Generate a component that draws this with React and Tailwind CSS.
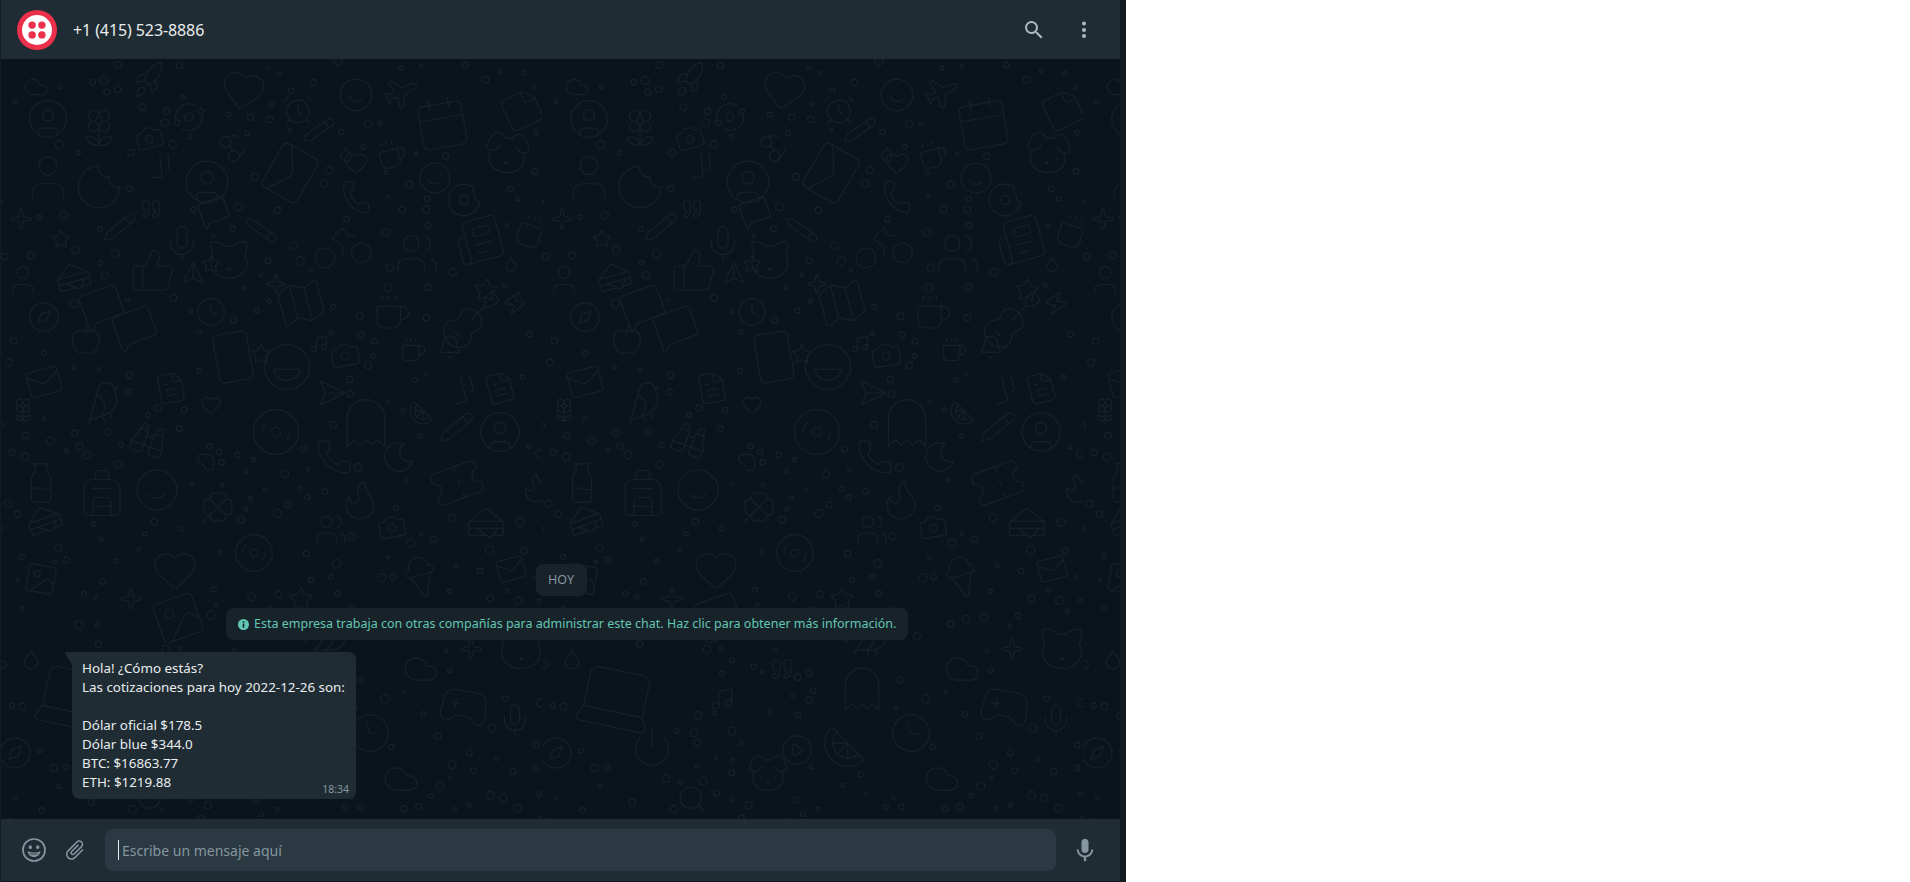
import {
    AlarmClock, Apple, Backpack, Bell, Bike, Binoculars, Bird, Calendar, Camera, Cat, CheckCheck, CircleUser, Citrus, Clock,
    Cloud, Clover, Coffee, Compass, Cookie, Disc3, Dog, Donut, FileText, Flame, Flower2, Gamepad2, Ghost, Glasses, Guitar,
    Heart, IceCreamCone, Image, Laptop, Mail, Map, MessageSquare, Mic, Milk, Moon, Music, Newspaper, Orbit, PawPrint,
    Pencil, Phone, CirclePlay, Plane, Power, Quote, Rocket, Sandwich, Send, Smartphone, Smile, Sparkle, Star, StickyNote,
    Ticket, ThumbsUp, User, Users, Zap, Droplet, Laugh, Search,
} from "lucide-react";

const TILE_W = 541;
const TILE_H = 985;
const LINE = "#172029";

// [icon, x, y, size, rotation] - tile coordinates read off the reference wallpaper
const DOODLES = [
    [Rocket, 148, 21, 36, -10], [Heart, 242, 31, 48, 10], [Smile, 355, 36, 38, 15], [Plane, 398, 34, 36, 20],
    [Calendar, 441, 64, 58, -10], [StickyNote, 521, 51, 44, -25], [Flower2, 98, 69, 42, 0], [Camera, 148, 79, 30, -15],
    [Orbit, 188, 58, 32, 20], [AlarmClock, 297, 51, 34, 0], [Glasses, 232, 88, 32, 60], [Pencil, 318, 71, 32, 10],
    [Coffee, 391, 96, 32, -15], [CircleUser, 47, 60, 44, 0], [User, 47, 118, 54, 0], [Dog, 506, 94, 52, 5],
    [Cookie, 98, 128, 50, 0], [CircleUser, 206, 123, 50, 0], [Mail, 289, 114, 60, -60], [CheckCheck, 160, 108, 34, -50],
    [Smile, 434, 119, 36, 15], [Heart, 355, 104, 26, 0], [Donut, 463, 141, 38, 20], [Phone, 355, 138, 34, 10],
    [Pencil, 119, 168, 34, 5], [MessageSquare, 213, 153, 32, -20], [Pencil, 260, 171, 32, 80], [Mic, 181, 184, 40, 0],
    [Bike, 340, 181, 68, -8], [Users, 416, 194, 46, 0], [Newspaper, 478, 181, 50, -15], [Coffee, 532, 174, 38, 20],
    [Cat, 228, 201, 48, 0], [ThumbsUp, 152, 211, 48, 0], [Send, 192, 218, 24, -45], [Sandwich, 72, 218, 38, -15],
    [User, 22, 221, 36, 0], [Map, 300, 244, 54, -15], [Guitar, 470, 261, 66, 0], [Star, 485, 231, 26, 5],
    [Zap, 514, 244, 26, 10], [Coffee, 391, 254, 40, 0], [Compass, 43, 258, 34, 0], [MessageSquare, 101, 248, 46, -20],
    [MessageSquare, 134, 269, 46, -20], [Clock, 210, 253, 32, 0], [Apple, 85, 281, 32, 0], [Smartphone, 232, 298, 58, -10],
    [Laugh, 286, 308, 54, 0], [Camera, 344, 296, 32, -10], [Coffee, 412, 291, 28, 0], [Bell, 449, 288, 26, 0],
    [Mail, 43, 323, 38, -15], [Bird, 101, 344, 48, -20], [FileText, 170, 329, 34, -10], [Heart, 210, 346, 22, 0],
    [Send, 326, 334, 30, 45], [CheckCheck, 463, 331, 38, -60], [FileText, 499, 329, 34, -15], [Disc3, 275, 373, 54, 0],
    [Ghost, 365, 364, 56, 0], [Citrus, 420, 354, 26, 0], [Pencil, 456, 368, 36, 5], [CircleUser, 499, 373, 46, 0],
    [Flower2, 22, 351, 26, 0], [Binoculars, 148, 381, 38, 20], [PawPrint, 210, 398, 32, 0], [Phone, 333, 398, 38, 0],
    [Moon, 398, 398, 38, 20], [Flame, 360, 440, 48, 10], [Milk, 40, 424, 46, 0], [Backpack, 101, 434, 54, 0],
    [Smile, 156, 431, 48, 0], [Clover, 217, 448, 38, 0], [Ticket, 456, 424, 56, -20], [Flame, 535, 428, 36, 0],
    [Sandwich, 43, 461, 38, -20], [Sandwich, 485, 464, 42, 0], [Camera, 391, 468, 30, -10], [Users, 330, 470, 34, 0],
    [Disc3, 253, 494, 44, 0], [Heart, 174, 511, 48, 0], [IceCreamCone, 420, 518, 48, -15], [Image, 177, 559, 54, -20],
    [Laptop, 74, 638, 90, 12], [Gamepad2, 463, 648, 54, 10], [Mic, 514, 661, 36, 0], [Clock, 369, 674, 44, -20],
    [Citrus, 302, 688, 46, 0], [Compass, 14, 694, 36, 0], [CirclePlay, 255, 691, 34, 0], [Power, 110, 688, 44, 0],
    [Dog, 226, 714, 46, 0], [Image, 40, 520, 36, 10], [Cat, 520, 590, 52, 0], [Star, 300, 540, 26, 0], [Mail, 510, 510, 32, -15],
    [Bird, 330, 580, 44, 0], [Cloud, 420, 610, 38, 0], [Ghost, 320, 630, 50, 0], [Music, 180, 640, 26, 0], [Droplet, 30, 600, 24, 0],
    [Quote, 240, 610, 24, 0], [Sparkle, 130, 540, 24, 0], [Sparkle, 470, 590, 24, 0], [Cloud, 400, 720, 38, 0], [Search, 150, 740, 32, 0],
    [Sparkle, 275, 225, 22, 0], [Sparkle, 20, 160, 24, 0], [Quote, 150, 150, 22, 0], [Cloud, 35, 28, 26, 0], [Star, 210, 205, 20, 0],
    [Star, 260, 295, 22, 0], [Music, 318, 285, 20, 0], [Droplet, 510, 205, 18, 0], [Droplet, 345, 95, 18, 0], [Star, 60, 180, 20, 0],
];

// seeded scatter of the little rings between the doodles
function scatterRings() {
    let seed = 73;
    const rand = () => {
        seed = (seed * 16807) % 2147483647;
        return seed / 2147483647;
    };
    const rings = [];
    for (let i = 0; i < 2400 && rings.length < 320; i++) {
        const x = rand() * TILE_W;
        const y = rand() * 780;
        const r = 1.6 + rand() * 2.6;
        const clear =
            DOODLES.every(([, dx, dy, size]) => Math.hypot(dx - x, dy - y) > size * 0.52 + r) &&
            rings.every((o) => Math.hypot(o.x - x, o.y - y) > 10);
        if (clear) rings.push({ x, y, r });
    }
    return rings;
}

const RINGS = scatterRings();

function Wallpaper() {
    return (
        <svg className="absolute inset-0 w-full h-full" aria-hidden="true">
            <defs>
                <pattern id="doodles" x="0" y="0" width={TILE_W} height={TILE_H} patternUnits="userSpaceOnUse">
                    {DOODLES.map(([Icon, x, y, size, rot], i) => (
                        <g key={i} transform={`translate(${x} ${y}) rotate(${rot})`}>
                            <Icon x={-size / 2} y={-size / 2} size={size} color={LINE} strokeWidth={1.1} absoluteStrokeWidth />
                        </g>
                    ))}
                    {RINGS.map((o, i) => (
                        <circle key={i} cx={o.x} cy={o.y} r={o.r} fill="none" stroke={LINE} strokeWidth="1.1" />
                    ))}
                </pattern>
            </defs>
            <rect width="100%" height="100%" fill="url(#doodles)" />
        </svg>
    );
}

function TwilioLogo() {
    return (
        <svg viewBox="0 0 40 40" className="w-10 h-10 shrink-0">
            <circle cx="20" cy="20" r="20" fill="#ea304a" />
            <circle cx="20" cy="20" r="15" fill="#ffffff" />
            <circle cx="15.1" cy="15.1" r="3.7" fill="#ea304a" />
            <circle cx="24.9" cy="15.1" r="3.7" fill="#ea304a" />
            <circle cx="15.1" cy="24.9" r="3.7" fill="#ea304a" />
            <circle cx="24.9" cy="24.9" r="3.7" fill="#ea304a" />
        </svg>
    );
}

function SearchIcon() {
    return (
        <svg viewBox="0 0 24 24" className="w-6 h-6 fill-[#aebac1]">
            <path d="M15.5 14h-.79l-.28-.27A6.47 6.47 0 0 0 16 9.5 6.5 6.5 0 1 0 9.5 16c1.61 0 3.09-.59 4.23-1.57l.27.28v.79l5 4.99L20.49 19l-4.99-5zm-6 0C7.01 14 5 11.99 5 9.5S7.01 5 9.5 5 14 7.01 14 9.5 11.99 14 9.5 14z" />
        </svg>
    );
}

function MenuIcon() {
    return (
        <svg viewBox="0 0 24 24" className="w-6 h-6 fill-[#aebac1]">
            <circle cx="12" cy="5.6" r="2" />
            <circle cx="12" cy="12" r="2" />
            <circle cx="12" cy="18" r="2" />
        </svg>
    );
}

function EmojiIcon() {
    return (
        <svg viewBox="0 0 24 24" className="w-6 h-6">
            <circle cx="12" cy="12" r="11" fill="none" stroke="#8696a0" strokeWidth="1.7" />
            <ellipse cx="8.3" cy="9.2" rx="1.6" ry="1.9" fill="#8696a0" />
            <ellipse cx="15.7" cy="9.2" rx="1.6" ry="1.9" fill="#8696a0" />
            <path d="M5.6 13.2c2 .9 4.1 1.3 6.4 1.3s4.4-.4 6.4-1.3c-.3 3.4-3 5.8-6.4 5.8s-6.1-2.4-6.4-5.8z" fill="#8696a0" />
            <path d="M7.6 15.2c1.4.4 2.9.6 4.4.6s3-.2 4.4-.6c-.2.4-.5.8-.8 1.1-1.1.2-2.3.3-3.6.3s-2.5-.1-3.6-.3c-.3-.3-.6-.7-.8-1.1z" fill="#202c33" />
        </svg>
    );
}

function AttachIcon() {
    return (
        <svg viewBox="0 0 24 24" className="w-6 h-6 fill-[#8696a0] rotate-45">
            <path d="M16.5 6v11.5c0 2.21-1.79 4-4 4s-4-1.79-4-4V5c0-1.38 1.12-2.5 2.5-2.5s2.5 1.12 2.5 2.5v10.5c0 .55-.45 1-1 1s-1-.45-1-1V6H10v9.5c0 1.38 1.12 2.5 2.5 2.5s2.5-1.12 2.5-2.5V5c0-2.21-1.79-4-4-4S7 2.79 7 5v12.5c0 3.04 2.46 5.5 5.5 5.5s5.5-2.46 5.5-5.5V6h-1.5z" />
        </svg>
    );
}

function MicIcon() {
    return (
        <svg viewBox="0 0 24 24" className="w-6 h-6 fill-[#8696a0]">
            <path d="M11.999 14.942c2.001 0 3.531-1.53 3.531-3.531V4.35c0-2.001-1.53-3.531-3.531-3.531S8.469 2.35 8.469 4.35v7.061c0 2.001 1.53 3.531 3.53 3.531zm6.238-3.53c0 3.53-2.942 6.002-6.237 6.002s-6.237-2.471-6.237-6.002H3.761c0 4.001 3.178 7.297 7.061 7.885v3.884h2.354v-3.884c3.884-.588 7.061-3.884 7.061-7.885h-2z" />
        </svg>
    );
}

function InfoIcon() {
    return (
        <svg viewBox="0 0 12 12" className="w-[11px] h-[11px] shrink-0">
            <circle cx="6" cy="6" r="6" fill="#62c7b4" />
            <rect x="5.1" y="5" width="1.8" height="4.4" fill="#182229" />
            <rect x="5.1" y="2.5" width="1.8" height="1.6" fill="#182229" />
        </svg>
    );
}

export default function App() {
    return (
        <div
            className="h-[882px] w-[1910px] bg-white overflow-hidden"
            style={{ fontFamily: '"Noto Sans", "Open Sans", sans-serif' }}
        >
            <div className="h-full w-[1126px] bg-[#111b21] pl-px pr-[6px] pb-px">
                <div className="h-full flex flex-col">

                    {/* HEADER */}

                    <header className="h-[59px] shrink-0 bg-[#202c33] flex items-center pl-4 pr-6">
                        <TwilioLogo />
                        <span className="ml-4 text-[16px] text-[#e9edef] tracking-[-0.1px]">+1 (415) 523-8886</span>
                        <div className="ml-auto flex items-center gap-[26px]">
                            <SearchIcon />
                            <MenuIcon />
                        </div>
                    </header>

                    {/* CHAT */}

                    <main className="relative flex-1 bg-[#0b131b] overflow-hidden flex flex-col justify-end pb-5">
                        <Wallpaper />

                        <div className="relative flex flex-col">
                            <div className="self-center h-8 w-[51px] ml-[1px] rounded-[7.5px] bg-[#182229] flex items-center justify-center text-[12.5px] text-[#8696a0]">
                                HOY
                            </div>

                            <div className="mt-3 ml-[225px] w-[682px] h-8 rounded-[7.5px] bg-[#182229] flex items-center pl-3 gap-[5px] text-[12.5px] text-[#62c7b4] whitespace-nowrap">
                                <InfoIcon />
                                Esta empresa trabaja con otras compañías para administrar este chat. Haz clic para obtener más información.
                            </div>

                            <div className="relative mt-3 ml-[71px] w-[284px] h-[147px] rounded-b-[7.5px] rounded-tr-[7.5px] bg-[#202c33] pl-[10px] pt-[7px] text-[13.4px] leading-[19px] text-[#e9edef] whitespace-nowrap">
                                <svg viewBox="0 0 7 13" className="absolute -left-[7px] top-0 w-[7px] h-[13px] fill-[#202c33]">
                                    <path d="M7 0H1C.2 0-.2.8.3 1.4L7 13z" />
                                </svg>
                                <div>Hola! ¿Cómo estás?</div>
                                <div>Las cotizaciones para hoy 2022-12-26 son:</div>
                                <div className="h-[19px]" />
                                <div>Dólar oficial $178.5</div>
                                <div>Dólar blue $344.0</div>
                                <div>BTC: $16863.77</div>
                                <div>ETH: $1219.88</div>
                                <span className="absolute right-[7px] bottom-[2px] text-[10.5px] leading-[15px] text-[#8696a0]">18:34</span>
                            </div>
                        </div>
                    </main>

                    {/* FOOTER */}

                    <footer className="h-[62px] shrink-0 bg-[#202c33] flex items-center pl-[21px]">
                        <EmojiIcon />
                        <div className="ml-[17px]">
                            <AttachIcon />
                        </div>
                        <div className="ml-[18px] w-[951px] h-[42px] rounded-lg bg-[#2a3942] flex items-center pl-[13px]">
                            <span className="w-px h-5 bg-[#e9edef]" />
                            <span className="ml-[3px] text-[14px] text-[#8696a0]">Escribe un mensaje aquí</span>
                        </div>
                        <div className="ml-[17px]">
                            <MicIcon />
                        </div>
                    </footer>

                </div>
            </div>
        </div>
    );
}
